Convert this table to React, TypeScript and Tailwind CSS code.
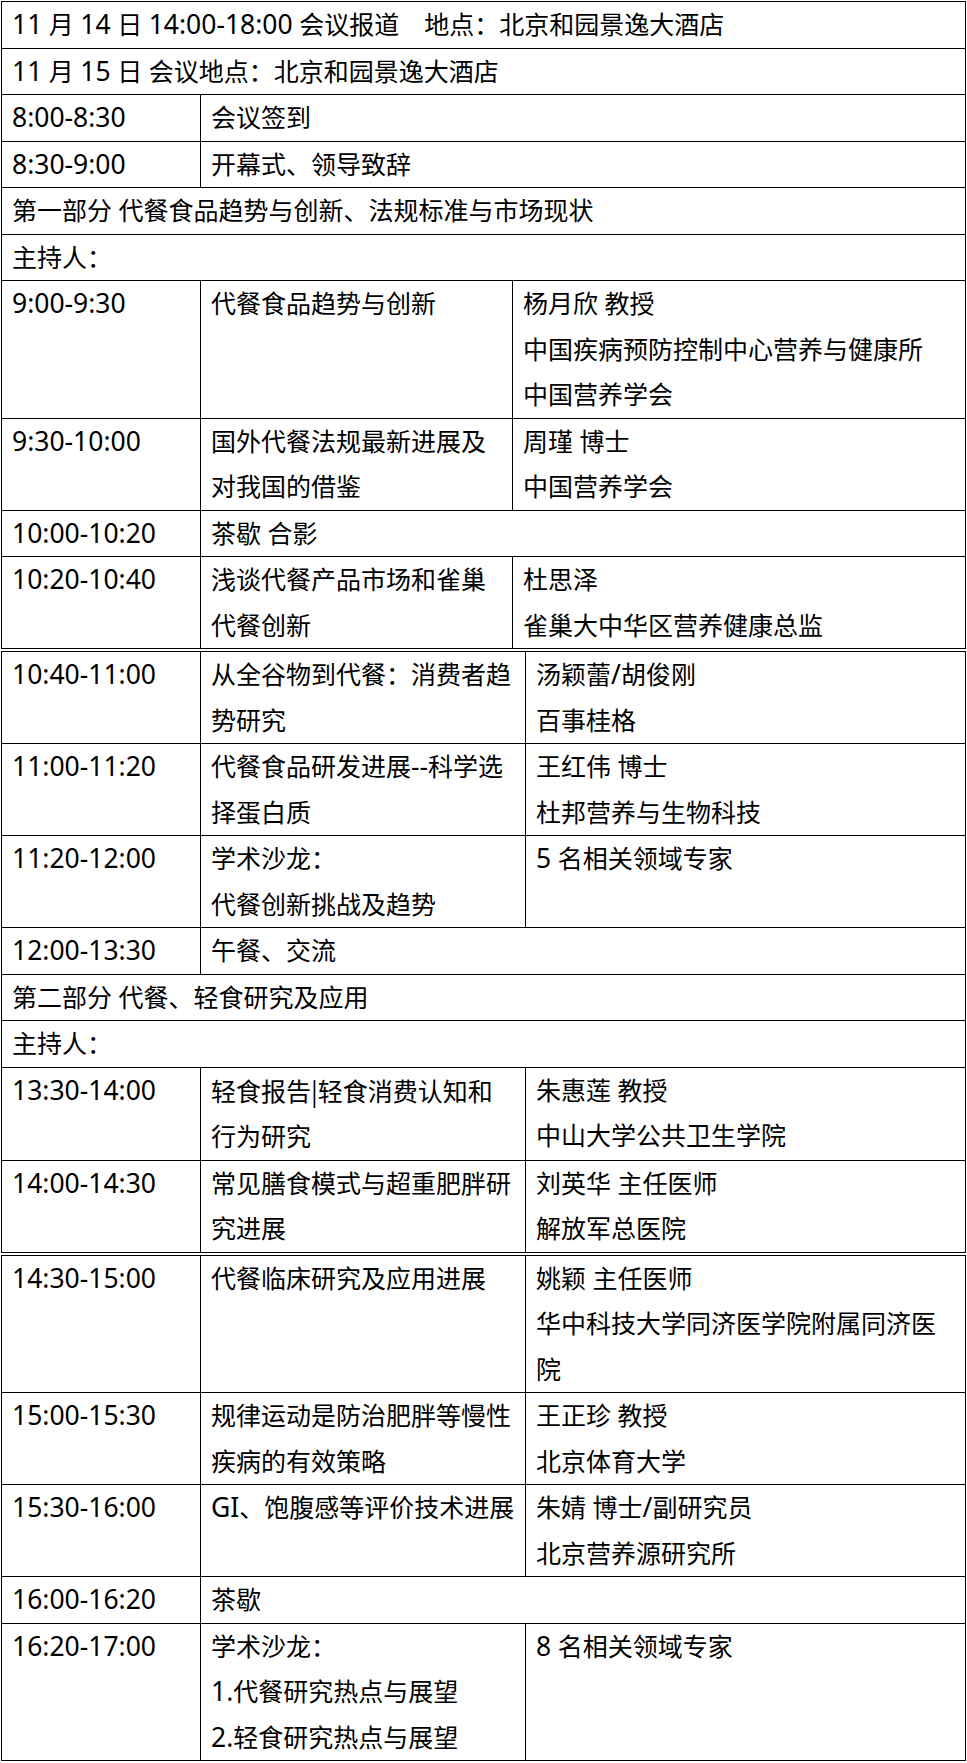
type Row = {
  time?: string;
  full?: string;
  topic?: string[];
  speaker?: string[];
};

// 三段表格：Word 里被拆开的地方会出现双线
const part1: Row[] = [
  { full: "11 月 14 日 14:00-18:00 会议报道　地点：北京和园景逸大酒店" },
  { full: "11 月 15 日 会议地点：北京和园景逸大酒店" },
  { time: "8:00-8:30", topic: ["会议签到"] },
  { time: "8:30-9:00", topic: ["开幕式、领导致辞"] },
  { full: "第一部分 代餐食品趋势与创新、法规标准与市场现状" },
  { full: "主持人：" },
  {
    time: "9:00-9:30",
    topic: ["代餐食品趋势与创新"],
    speaker: ["杨月欣 教授", "中国疾病预防控制中心营养与健康所", "中国营养学会"],
  },
  {
    time: "9:30-10:00",
    topic: ["国外代餐法规最新进展及", "对我国的借鉴"],
    speaker: ["周瑾 博士", "中国营养学会"],
  },
  { time: "10:00-10:20", topic: ["茶歇 合影"] },
  {
    time: "10:20-10:40",
    topic: ["浅谈代餐产品市场和雀巢", "代餐创新"],
    speaker: ["杜思泽", "雀巢大中华区营养健康总监"],
  },
];

const part2: Row[] = [
  {
    time: "10:40-11:00",
    topic: ["从全谷物到代餐：消费者趋", "势研究"],
    speaker: ["汤颖蕾/胡俊刚", "百事桂格"],
  },
  {
    time: "11:00-11:20",
    topic: ["代餐食品研发进展--科学选", "择蛋白质"],
    speaker: ["王红伟 博士", "杜邦营养与生物科技"],
  },
  {
    time: "11:20-12:00",
    topic: ["学术沙龙：", "代餐创新挑战及趋势"],
    speaker: ["5 名相关领域专家"],
  },
  { time: "12:00-13:30", topic: ["午餐、交流"] },
  { full: "第二部分 代餐、轻食研究及应用" },
  { full: "主持人：" },
  {
    time: "13:30-14:00",
    topic: ["轻食报告|轻食消费认知和", "行为研究"],
    speaker: ["朱惠莲 教授", "中山大学公共卫生学院"],
  },
  {
    time: "14:00-14:30",
    topic: ["常见膳食模式与超重肥胖研", "究进展"],
    speaker: ["刘英华 主任医师", "解放军总医院"],
  },
];

const part3: Row[] = [
  {
    time: "14:30-15:00",
    topic: ["代餐临床研究及应用进展"],
    speaker: ["姚颖 主任医师", "华中科技大学同济医学院附属同济医", "院"],
  },
  {
    time: "15:00-15:30",
    topic: ["规律运动是防治肥胖等慢性", "疾病的有效策略"],
    speaker: ["王正珍 教授", "北京体育大学"],
  },
  {
    time: "15:30-16:00",
    topic: ["GI、饱腹感等评价技术进展"],
    speaker: ["朱婧 博士/副研究员", "北京营养源研究所"],
  },
  { time: "16:00-16:20", topic: ["茶歇"] },
  {
    time: "16:20-17:00",
    topic: ["学术沙龙：", "1.代餐研究热点与展望", "2.轻食研究热点与展望"],
    speaker: ["8 名相关领域专家"],
  },
];

// 西文数字在原图里比中文略大一号
function Txt({ s }: { s: string }) {
  const parts = s.split(/([A-Za-z0-9:.\-\/]+|\|)/);
  return (
    <>
      {parts.map((p, i) => {
        if (!p) return null;
        if (p === "|")
          return (
            <span key={i} className="font-['Noto_Sans_CJK_SC',sans-serif]">
              |
            </span>
          );
        if (/^[A-Za-z0-9:.\-\/]+$/.test(p))
          return (
            <span key={i} className="text-[26.5px] leading-none">
              {p}
            </span>
          );
        return <span key={i}>{p}</span>;
      })}
    </>
  );
}

function Lines({ lines }: { lines: string[] }) {
  return (
    <>
      {lines.map((l, i) => (
        <div key={i} className="whitespace-pre">
          <Txt s={l} />
        </div>
      ))}
    </>
  );
}

function Table({ rows, cols }: { rows: Row[]; cols: string }) {
  return (
    <div className="w-[965px] border border-black">
      {rows.map((r, i) => (
        <div
          key={i}
          className={`grid ${cols} ${i > 0 ? "border-t border-black" : ""}`}
        >
          {r.full ? (
            <div className="col-span-3 px-[10px] whitespace-pre">
              <Txt s={r.full} />
            </div>
          ) : (
            <>
              <div className="border-r border-black px-[10px]">
                <Txt s={r.time ?? ""} />
              </div>
              {r.speaker ? (
                <>
                  <div className="border-r border-black px-[10px]">
                    <Lines lines={r.topic ?? []} />
                  </div>
                  <div className="px-[10px]">
                    <Lines lines={r.speaker} />
                  </div>
                </>
              ) : (
                <div className="col-span-2 px-[10px]">
                  <Lines lines={r.topic ?? []} />
                </div>
              )}
            </>
          )}
        </div>
      ))}
    </div>
  );
}

export default function App() {
  return (
    <div className="min-h-[1763px] bg-white pt-px pl-px font-['Noto_Sans','Noto_Sans_CJK_SC',sans-serif] text-[25px] leading-[45.5px] text-black">
      <Table rows={part1} cols="grid-cols-[199px_312px_1fr]" />
      <div className="h-[2px]" />
      <Table rows={part2} cols="grid-cols-[199px_325px_1fr]" />
      <div className="h-[2px]" />
      <Table rows={part3} cols="grid-cols-[199px_325px_1fr]" />
    </div>
  );
}
